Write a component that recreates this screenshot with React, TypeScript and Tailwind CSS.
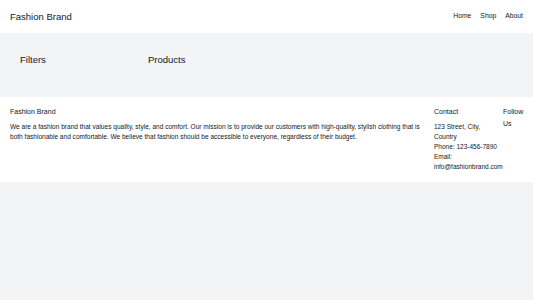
export default function App() {
  return (
    <div className="min-h-[300px] bg-[#f3f4f6] text-[#111827] font-['Liberation_Sans',Arial,sans-serif]">
      <header className="h-[33px] bg-white flex items-center justify-between px-[10px]">
        <h1 className="text-[9.5px] leading-none">Fashion Brand</h1>
        <nav className="flex items-center gap-[9px] text-[6.8px]">
          <a>Home</a>
          <a>Shop</a>
          <a>About</a>
        </nav>
      </header>

      <main className="h-[64px] flex px-[20px] pt-[21px]">
        <aside className="w-[128px]">
          <h2 className="text-[9.5px] leading-[12px]">Filters</h2>
        </aside>
        <section className="flex-1">
          <h2 className="text-[9.5px] leading-[12px]">Products</h2>
        </section>
      </main>

      <footer className="bg-white flex p-[10px] text-[6.5px] leading-[10px]">
        <div className="flex-1 pr-[8px]">
          <h3 className="text-[7px] leading-[10px] mb-[5px]">Fashion Brand</h3>
          <p className="text-[6.55px] leading-[10px]">
            We are a fashion brand that values quality, style, and comfort. Our mission is to provide our
            customers with high-quality, stylish clothing that is both fashionable and comfortable. We believe
            that fashion should be accessible to everyone, regardless of their budget.
          </p>
        </div>
        <div className="w-[69px]">
          <h3 className="text-[7px] leading-[10px] mb-[5px]">Contact</h3>
          <p>123 Street, City, Country</p>
          <p>Phone: 123-456-7890</p>
          <p>Email: info@fashionbrand.com</p>
        </div>
        <div className="w-[20px]">
          <h3 className="text-[7px] leading-[12px] -mt-[1px]">Follow Us</h3>
        </div>
      </footer>
    </div>
  );
}
